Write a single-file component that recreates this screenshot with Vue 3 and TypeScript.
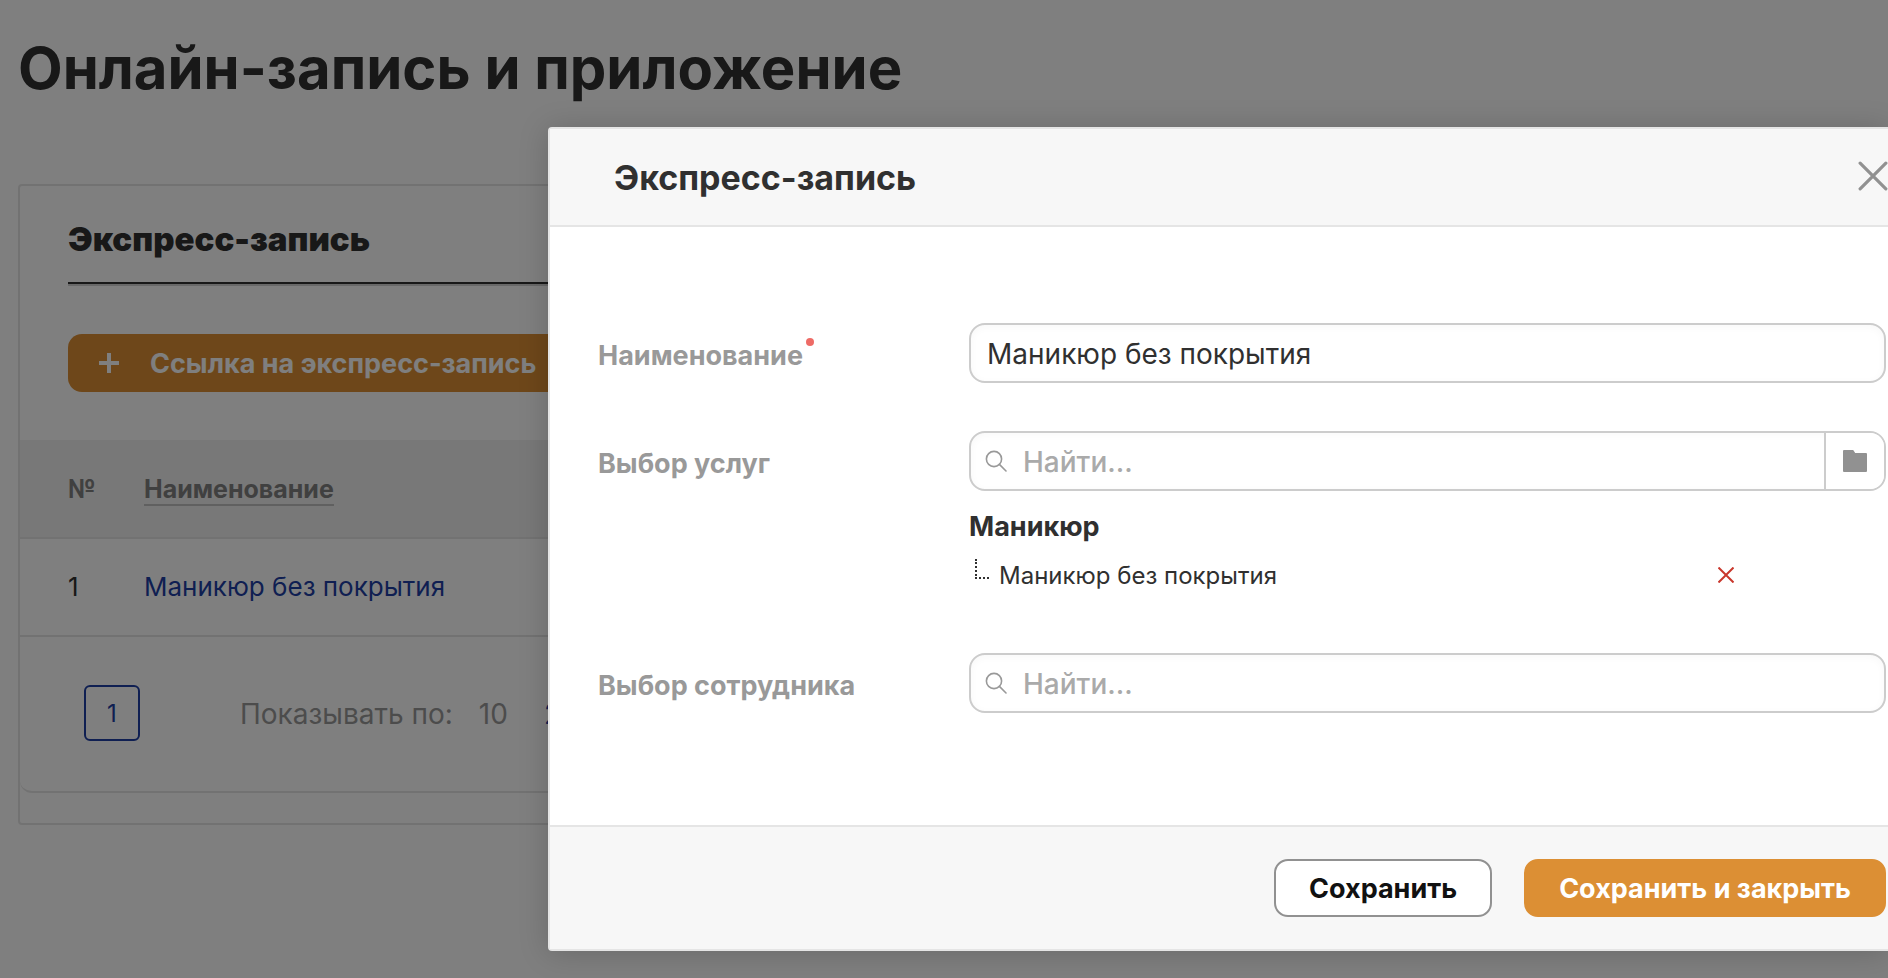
<script setup lang="ts">
import { ref } from 'vue'

interface Service {
  id: number
  name: string
}

const links = ref<Service[]>([{ id: 1, name: 'Маникюр без покрытия' }])
const selected = ref<Service[]>([{ id: 1, name: 'Маникюр без покрытия' }])
const name = ref('Маникюр без покрытия')
const serviceQuery = ref('')
const staffQuery = ref('')

function removeService(id: number) {
  selected.value = selected.value.filter((s) => s.id !== id)
}
</script>

<template>
  <div class="screen">
    <main class="page">
      <h1 class="page-title">Онлайн-запись и приложение</h1>

      <section class="card">
        <div class="card-head">
          <h2 class="card-title">Экспресс-запись</h2>
          <button type="button" class="add-btn">
            <svg class="plus" viewBox="0 0 22 22" aria-hidden="true">
              <path d="M11 1v20M1 11h20" />
            </svg>
            <span>Ссылка на экспресс-запись</span>
          </button>
        </div>

        <table class="grid">
          <thead>
            <tr>
              <th class="num" scope="col">№</th>
              <th scope="col"><span class="sortable">Наименование</span></th>
            </tr>
          </thead>
          <tbody>
            <tr v-for="(link, i) in links" :key="link.id">
              <td class="num">{{ i + 1 }}</td>
              <td><a href="#" class="row-link">{{ link.name }}</a></td>
            </tr>
          </tbody>
        </table>

        <div class="pager">
          <button type="button" class="page-btn">1</button>
          <div class="sizes">
            <span class="sizes-label">Показывать по:</span>
            <span>10</span>
            <a href="#" class="row-link">25</a>
          </div>
        </div>
      </section>
    </main>

    <div class="overlay">
      <div class="modal" role="dialog" aria-modal="true" aria-labelledby="modal-title">
        <header class="modal-head">
          <h2 id="modal-title" class="modal-title">Экспресс-запись</h2>
          <button type="button" class="close" aria-label="Закрыть">
            <svg viewBox="0 0 28 28" aria-hidden="true">
              <path d="M2 2l24 24M26 2L2 26" />
            </svg>
          </button>
        </header>

        <form id="express-form" class="modal-body" @submit.prevent>
          <div class="field">
            <label class="label" for="name">Наименование<i class="required"></i></label>
            <div class="control">
              <input id="name" v-model="name" class="text" type="text" />
            </div>
          </div>

          <div class="field">
            <label class="label" for="service">Выбор услуг</label>
            <div>
              <div class="control">
                <svg class="search" viewBox="0 0 22 22" aria-hidden="true">
                  <circle cx="9" cy="9" r="7.6" />
                  <path d="M14.4 14.4L21 21" />
                </svg>
                <input id="service" v-model="serviceQuery" class="text" type="text" placeholder="Найти..." />
                <button type="button" class="browse" aria-label="Каталог услуг">
                  <svg viewBox="0 0 24 22" aria-hidden="true">
                    <path d="M1 0h9.2l2 3H23a1 1 0 0 1 1 1v17a1 1 0 0 1-1 1H1a1 1 0 0 1-1-1V1a1 1 0 0 1 1-1z" />
                  </svg>
                </button>
              </div>

              <div class="tree">
                <div class="tree-group">Маникюр</div>
                <div v-for="s in selected" :key="s.id" class="tree-item">
                  <i class="branch"></i>
                  <span class="tree-name">{{ s.name }}</span>
                  <button type="button" class="remove" aria-label="Удалить" @click="removeService(s.id)">
                    <svg viewBox="0 0 16 16" aria-hidden="true">
                      <path d="M.5 .5l15 15M15.5 .5l-15 15" />
                    </svg>
                  </button>
                </div>
              </div>
            </div>
          </div>

          <div class="field">
            <label class="label" for="staff">Выбор сотрудника</label>
            <div class="control">
              <svg class="search" viewBox="0 0 22 22" aria-hidden="true">
                <circle cx="9" cy="9" r="7.6" />
                <path d="M14.4 14.4L21 21" />
              </svg>
              <input id="staff" v-model="staffQuery" class="text" type="text" placeholder="Найти..." />
            </div>
          </div>
        </form>

        <footer class="modal-foot">
          <button type="submit" form="express-form" class="btn">Сохранить</button>
          <button type="submit" form="express-form" class="btn primary">Сохранить и закрыть</button>
        </footer>
      </div>
    </div>
  </div>
</template>

<style>
body {
  background: #fff;
}
</style>

<style scoped>
.screen {
  position: relative;
  min-height: 100vh;
  overflow: hidden;
  font-family: Inter, "Noto Sans", sans-serif;
  color: #303030;
  background: #fff;
}

.screen *,
.screen *::before {
  box-sizing: border-box;
}

button,
input {
  font-family: inherit;
}

button {
  cursor: pointer;
}

svg {
  display: block;
  fill: none;
}

a {
  text-decoration: none;
}

.page {
  padding: 30px 0 0 18px;
}

.page-title {
  margin: 0 0 78px;
  font-size: 58px;
  line-height: 76px;
  font-weight: 700;
}

.card {
  border: 2px solid #e5e5e5;
  border-radius: 4px;
  padding-bottom: 30px;
}

.card-head {
  padding: 24px 48px 48px;
}

.card-title {
  margin: 0 0 50px;
  padding: 8px 0 22px;
  border-bottom: 2px solid #303030;
  box-shadow: 0 2px 0 #d0d0d0;
  font-size: 33px;
  line-height: 42px;
  font-weight: 900;
}

.add-btn {
  display: flex;
  align-items: center;
  gap: 30px;
  height: 58px;
  padding: 0 30px;
  border: 0;
  border-radius: 14px;
  background: #dc8f34;
  color: #fff;
  font-size: 27px;
  font-weight: 700;
}

.plus {
  width: 22px;
  height: 22px;
  stroke: #fff;
  stroke-width: 4;
}

.grid {
  width: 100%;
  border-collapse: collapse;
  text-align: left;
  font-size: 26px;
  line-height: 32px;
}

.grid th,
.grid td {
  height: 98px;
  padding: 0;
  border-bottom: 2px solid #e5e5e5;
}

.grid th {
  background: #f0f0f0;
  color: #808080;
  font-size: 25px;
  font-weight: 700;
}

.grid .num {
  width: 124px;
  padding-left: 48px;
}

.sortable {
  border-bottom: 2px solid #c0c0c0;
}

.row-link {
  color: #1e3ea4;
}

.pager {
  display: flex;
  align-items: center;
  gap: 100px;
  height: 156px;
  padding: 0 64px 2px;
  border-bottom: 2px solid #e5e5e5;
  border-radius: 0 0 0 12px;
}

.page-btn {
  width: 56px;
  height: 56px;
  border: 2px solid #1e3ea4;
  border-radius: 6px;
  background: #fff;
  color: #1e3ea4;
  font-size: 24px;
}

.sizes {
  display: flex;
  gap: 36px;
  padding-top: 2px;
  color: #999;
  font-size: 28px;
  line-height: 36px;
}

.sizes-label {
  margin-right: -10px;
}

.overlay {
  position: absolute;
  inset: 0;
  padding: 127px 0 27px 548px;
  background: rgba(0, 0, 0, 0.5);
}

.modal {
  display: flex;
  flex-direction: column;
  height: 100%;
  border: 2px solid #e5e5e5;
  border-right: 0;
  border-radius: 4px 0 0 4px;
  background: #fff;
  box-shadow: 0 2px 30px rgba(0, 0, 0, 0.18);
}

.modal-head {
  display: flex;
  align-items: center;
  justify-content: space-between;
  height: 98px;
  padding: 0 0 2px 64px;
  border-bottom: 2px solid #e5e5e5;
  background: #f7f7f7;
}

.modal-title {
  margin: 4px 0 0;
  font-size: 34px;
  line-height: 44px;
  font-weight: 700;
}

.close {
  padding: 0;
  border: 0;
  background: none;
}

.close svg {
  width: 30px;
  height: 30px;
  stroke: #919191;
  stroke-width: 3;
  stroke-linecap: round;
}

.modal-body {
  display: flex;
  flex: 1;
  flex-direction: column;
  gap: 48px;
  padding: 96px 2px 0 48px;
}

.field {
  display: grid;
  grid-template-columns: 371px 1fr;
}

.label {
  display: flex;
  align-items: center;
  height: 60px;
  padding-top: 4px;
  color: #999;
  font-size: 27px;
  font-weight: 700;
}

.required {
  width: 8px;
  height: 8px;
  margin: 0 0 26px 3px;
  border-radius: 50%;
  background: #ee6b66;
}

.control {
  display: flex;
  align-items: center;
  height: 60px;
  border: 2px solid #ccc;
  border-radius: 16px;
  background: #fff;
  box-shadow: inset 0 2px 8px rgba(0, 0, 0, 0.03);
  overflow: hidden;
}

.text {
  flex: 1;
  min-width: 0;
  height: 100%;
  padding: 2px 16px 0;
  border: 0;
  outline: 0;
  background: none;
  color: #303030;
  font-size: 28px;
}

.text::placeholder {
  color: #aaa;
  font-weight: 500;
  opacity: 1;
}

.search {
  width: 22px;
  height: 22px;
  margin-left: 14px;
  stroke: #999;
  stroke-width: 1.6;
  stroke-linecap: round;
}

.browse {
  display: flex;
  align-items: center;
  justify-content: center;
  width: 60px;
  height: 100%;
  padding: 0;
  border: 0;
  border-left: 2px solid #ccc;
  background: #fff;
}

.browse svg {
  width: 24px;
  height: 22px;
  fill: #919191;
}

.tree {
  padding-top: 18px;
}

.tree-group {
  font-size: 27px;
  line-height: 36px;
  font-weight: 700;
}

.tree-item {
  display: flex;
  align-items: center;
  height: 60px;
  padding: 0 152px 0 6px;
  font-size: 24px;
}

.branch {
  width: 14px;
  height: 20px;
  margin: 0 10px 12px 0;
  border: 0 dotted #303030;
  border-width: 0 0 2px 2px;
}

.tree-name {
  flex: 1;
}

.remove {
  padding: 0;
  border: 0;
  background: none;
}

.remove svg {
  width: 16px;
  height: 16px;
  stroke: #c9372c;
  stroke-width: 2;
}

.modal-foot {
  display: flex;
  align-items: center;
  justify-content: flex-end;
  gap: 32px;
  height: 124px;
  padding-right: 2px;
  border-top: 2px solid #e5e5e5;
  background: #f7f7f7;
}

.btn {
  height: 58px;
  padding: 0 33px;
  border: 2px solid #919191;
  border-radius: 14px;
  background: #fff;
  color: #111;
  font-size: 27px;
  font-weight: 700;
}

.primary {
  border-color: #dc8f34;
  background: #dc8f34;
  color: #fff;
}
</style>
